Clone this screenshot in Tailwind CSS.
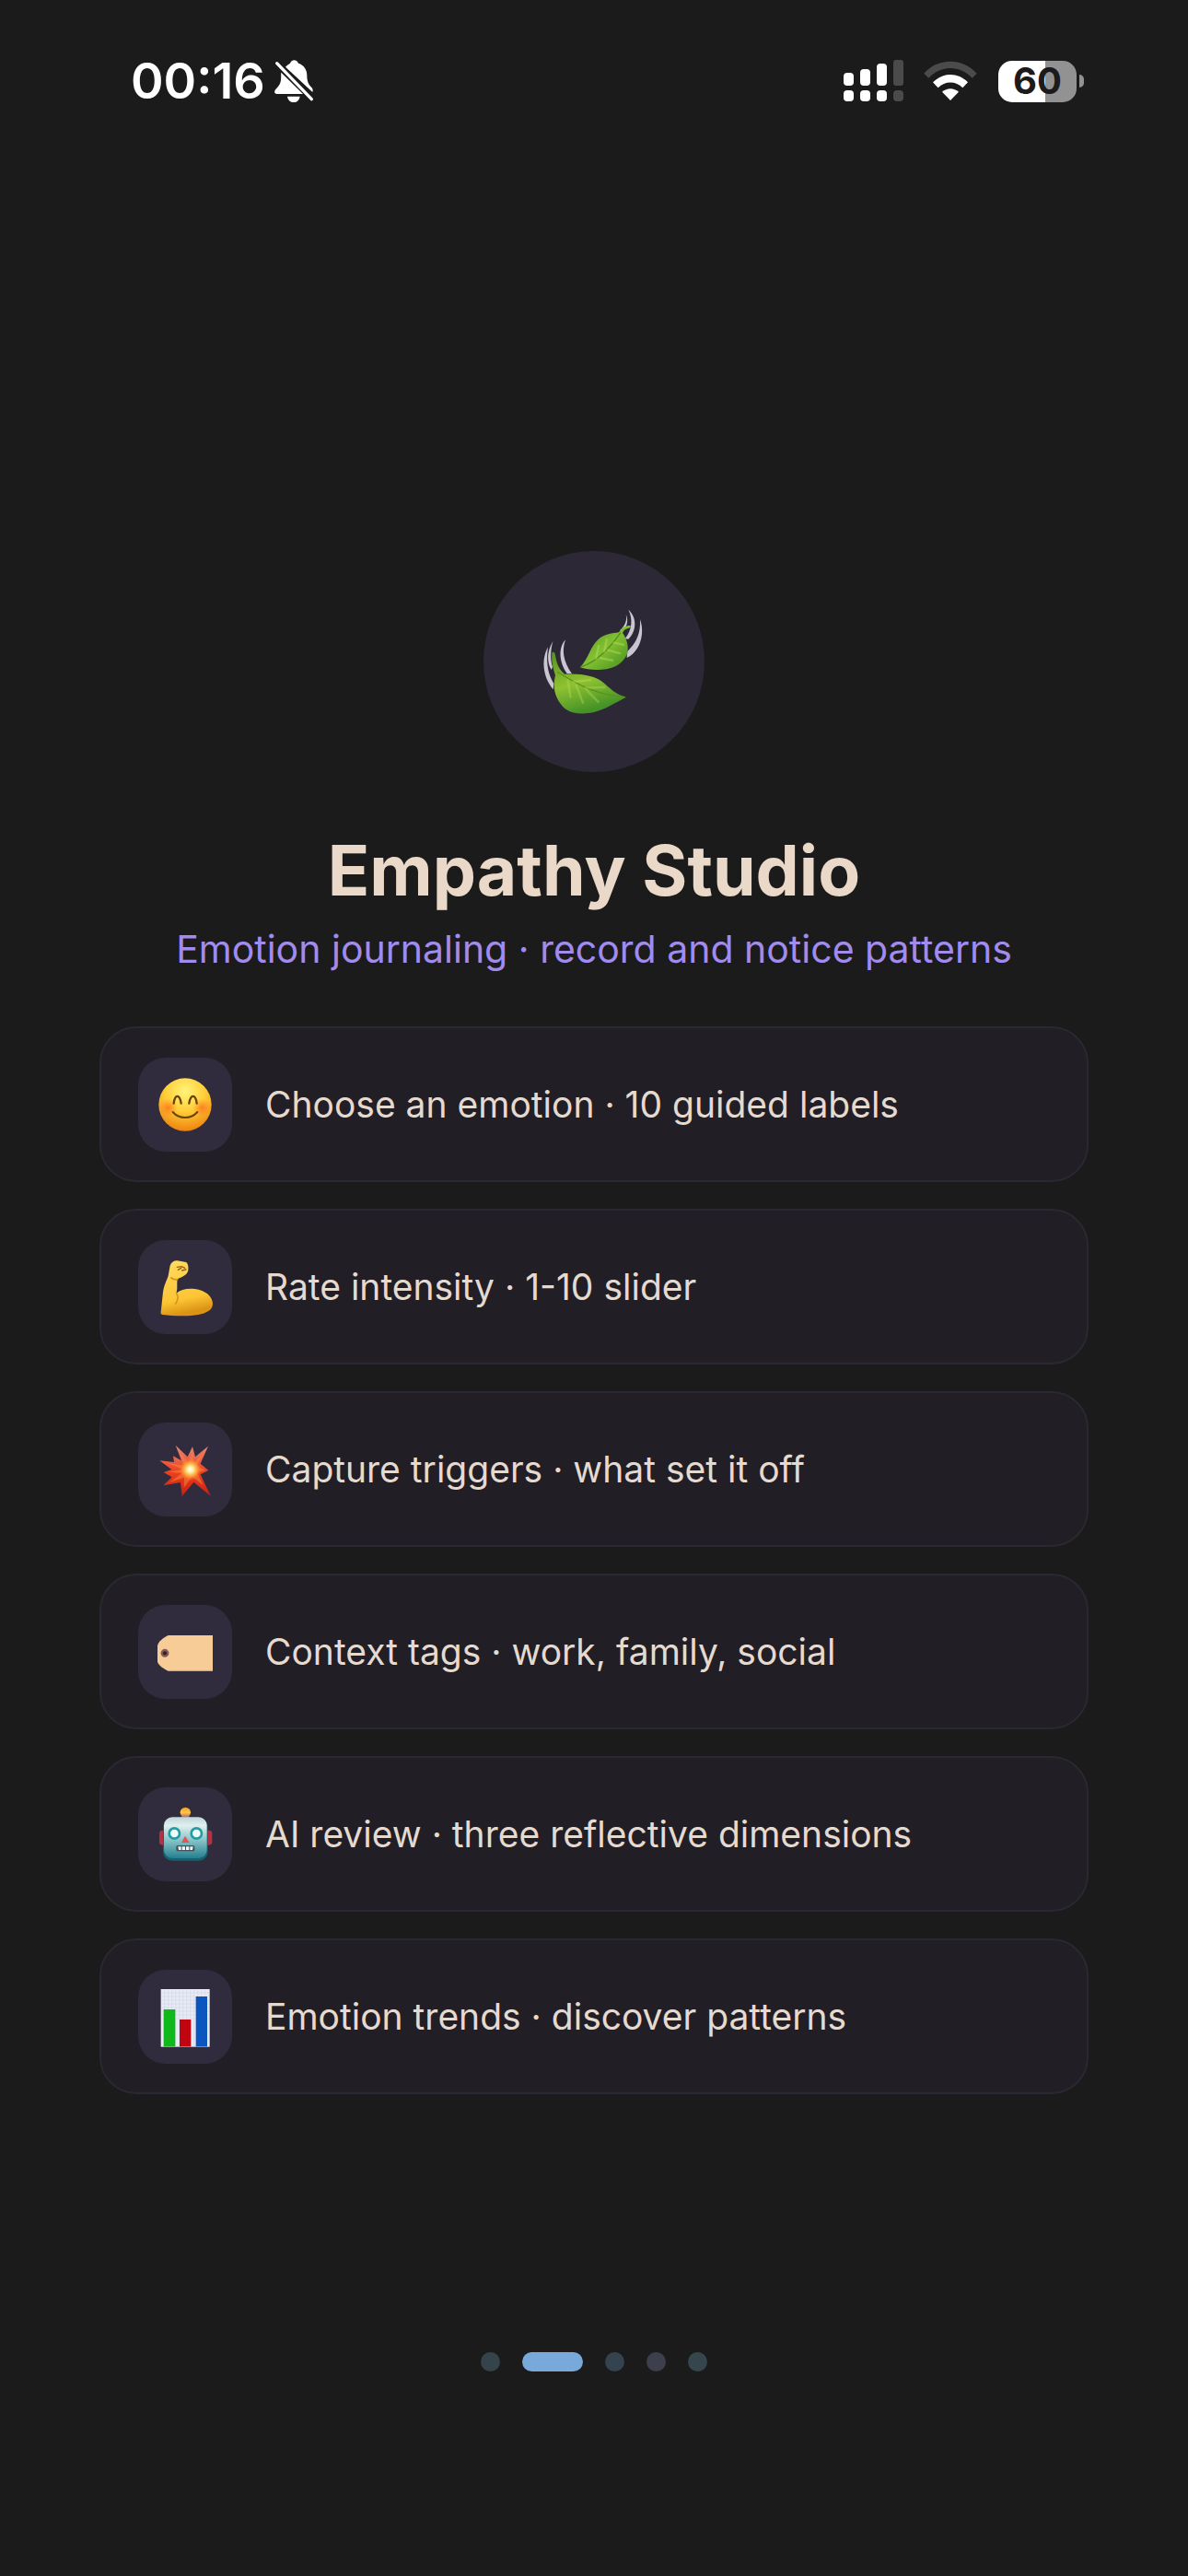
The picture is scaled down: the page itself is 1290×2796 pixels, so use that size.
<!doctype html>
<html lang="en">

<head>
    <meta charset="utf-8">
    <meta name="viewport" content="width=device-width, initial-scale=1">
    <title>Empathy Studio</title>
    <script src="https://cdn.jsdelivr.net/npm/@tailwindcss/browser@4"></script>
</head>

<body class="flex min-h-screen flex-col bg-[#1b1b1b] font-['Inter','Roboto',sans-serif] text-[#e5dad0]">
    <!-- Status bar -->
    <header class="flex h-44 items-center justify-between pr-[113px] pl-[142px] text-white">
        <div class="flex items-center gap-2.5">
            <time class="text-[54px] leading-none font-semibold">00:16</time>
            <svg class="h-[46px] w-[43px]" viewBox="0 0 129 138" fill="#fff" aria-label="Silent mode">
                <path d="M36 23C42 16 47 14 51 11C54 3 60 1 64 1C69 1 75 3 78 11C96 17 106 31 106 50C106 72 112 80 122 91C125 95 126 101 124 105Z" />
                <path d="M22 41L93 111H8C2 111-1 107 1 101C3 93 18 87 21 66C22 57 21 48 22 41Z" />
                <path d="M42 119H83C81 131 73 138 63 138C52 138 44 131 42 119Z" />
                <path d="M8 11L121 128" stroke="#fff" stroke-width="10" stroke-linecap="round" />
            </svg>
        </div>
        <div class="flex items-center">
            <svg class="h-[46px] w-[66px]" viewBox="0 0 66 46" fill="#fff" aria-label="Signal">
                <rect x="0" y="14" width="11" height="14" rx="4" />
                <rect x="18" y="10" width="11" height="18" rx="4" />
                <rect x="36" y="4" width="11" height="24" rx="4" />
                <rect x="54" y="0" width="11" height="28" rx="3" fill="#4b4b4b" />
                <rect x="0" y="33" width="11" height="12" rx="4" />
                <rect x="18" y="33" width="11" height="12" rx="4" />
                <rect x="36" y="33" width="11" height="12" rx="4" />
                <rect x="54" y="33" width="11" height="12" rx="4" fill="#4b4b4b" />
            </svg>
            <svg class="ml-[21px] h-[44px] w-[58px]" viewBox="0 0 174 132" aria-label="Wi-Fi">
                <path d="M1 41C48-11 126-11 173 41L158 56C118 13 56 13 16 56Z" fill="#4b4b4b" />
                <path d="M30 70C62 37 112 37 144 70L127 88C105 65 69 65 47 88Z" fill="#fff" />
                <path d="M60 101C76 87 98 87 114 101L87 129Z" fill="#fff" />
            </svg>
            <div class="ml-[23px] flex items-center gap-[3px]">
                <div class="flex h-[45px] w-[85px] items-center justify-center rounded-[15px] bg-linear-to-r from-white from-60% to-[#929292] to-60% text-[40px] leading-none font-bold text-[#1b1b1b]">60</div>
                <div class="h-[14px] w-[5px] rounded-r-full bg-[#929292]"></div>
            </div>
        </div>
    </header>

    <main class="flex flex-1 flex-col px-[108px] pt-[422px]">
        <div class="mx-auto size-[240px] rounded-full bg-[#2c2835]">
            <svg class="size-full" viewBox="45 54 720 720" aria-hidden="true">
                <defs>
                    <linearGradient id="leafLow" x1="0" y1="0" x2=".35" y2="1">
                        <stop offset="0" stop-color="#57911c" />
                        <stop offset=".55" stop-color="#8fc232" />
                        <stop offset="1" stop-color="#459227" />
                    </linearGradient>
                    <linearGradient id="leafHigh" x1="0" y1="0" x2="1" y2="1">
                        <stop offset="0" stop-color="#4c9420" />
                        <stop offset=".5" stop-color="#83c033" />
                        <stop offset="1" stop-color="#3f8c1e" />
                    </linearGradient>
                </defs>
                <!-- motion strokes -->
                <g fill="#c9c5d3">
                    <path d="M255 367C234 405 236 461 272 505L274 486C252 449 249 412 255 367Z" />
                    <path d="M271 348C250 383 252 419 266 441L270 432C262 407 263 379 271 348Z" />
                    <path d="M312 343C288 369 291 417 317 453L333 454C304 412 300 379 312 343Z" />
                    <path d="M509 260C514 281 505 298 489 313L501 312C515 296 517 277 509 260Z" />
                    <path d="M517 245C533 278 528 311 506 340L517 341C542 318 548 272 517 245Z" />
                    <path d="M555 277C557 320 546 350 514 381L512 402C552 385 573 327 555 277Z" />
                </g>
                <path d="M268 385C275 381 278 386 279 394C283 422 292 441 309 455C365 452 407 461 431 479C457 500 474 520 509 530C468 551 435 578 378 583C330 588 307 568 297 553C269 516 274 481 279 459C270 432 266 410 268 385Z" fill="url(#leafLow)" />
                <path d="M286 448C336 478 396 520 507 530" fill="none" stroke="#5a921d" stroke-width="4" />
                <path d="M319 472L329 532M346 489L370 551M378 504L421 548M335 480L397 474M374 500L442 498" fill="none" stroke="#c3e05a" stroke-width="7" opacity=".35" />
                <path d="M360 433C388 403 392 367 419 342C441 323 465 323 486 319C497 302 510 296 523 297C527 301 522 305 516 306C506 308 501 313 498 321C513 340 520 371 512 392C501 415 475 438 431 440C404 442 381 440 360 433Z" fill="url(#leafHigh)" />
                <path d="M362 432C420 413 458 367 492 320" fill="none" stroke="#52901c" stroke-width="4" />
                <path d="M411 407L421 360M438 385L447 340M422 402L468 411M447 376L492 388M467 352L504 360" fill="none" stroke="#c6e25c" stroke-width="7" opacity=".4" />
            </svg>
        </div>

        <h1 class="mt-[62px] text-center text-[75px] leading-[90px] font-bold text-[#ead9c8]">Empathy Studio</h1>
        <p class="mt-3 text-center text-[41px] leading-[56px] text-[#a18bef]">Emotion journaling · record and notice patterns</p>

        <ul class="mt-14 flex flex-col gap-[29px]">
            <li class="flex h-[169px] items-center gap-9 rounded-[40px] border-2 border-[#2a2830] bg-[#211e25] px-10">
                <svg class="size-[102px] shrink-0 rounded-[30px] bg-[#302c3d]" viewBox="0 0 306 306" aria-hidden="true">
                    <defs>
                        <radialGradient id="face" cx=".5" cy=".25" r=".75">
                            <stop offset="0" stop-color="#fff47a" />
                            <stop offset=".5" stop-color="#ffce38" />
                            <stop offset="1" stop-color="#ee8410" />
                        </radialGradient>
                        <radialGradient id="blush">
                            <stop offset="0" stop-color="#ff6f1c" stop-opacity=".8" />
                            <stop offset="1" stop-color="#ff7b1c" stop-opacity="0" />
                        </radialGradient>
                    </defs>
                    <circle cx="153" cy="153" r="86" fill="url(#face)" />
                    <circle cx="98" cy="163" r="30" fill="url(#blush)" />
                    <circle cx="208" cy="163" r="30" fill="url(#blush)" />
                    <g fill="none" stroke="#6b4208" stroke-linecap="round">
                        <path d="M116 149C120 118 135 118 140 149M166 149C171 118 187 118 191 149" stroke-width="7" />
                        <path d="M113 177C134 201 172 201 193 177" stroke-width="6" />
                    </g>
                </svg>
                <span class="text-[39px] leading-[52px]">Choose an emotion · 10 guided labels</span>
            </li>
            <li class="flex h-[169px] items-center gap-9 rounded-[40px] border-2 border-[#2a2830] bg-[#211e25] px-10">
                <svg class="size-[102px] shrink-0 rounded-[30px] bg-[#302c3d]" viewBox="0 0 306 306" aria-hidden="true">
                    <defs>
                        <linearGradient id="arm" x1="0" y1="0" x2=".2" y2="1">
                            <stop offset="0" stop-color="#ffdc62" />
                            <stop offset=".75" stop-color="#fcc534" />
                            <stop offset="1" stop-color="#dd9415" />
                        </linearGradient>
                    </defs>
                    <path d="M104 83C108 72 117 66 128 67L156 72C163 76 164 87 163 99C159 114 145 119 128 127C125 145 130 158 124 173C139 161 160 156 185 159C219 163 243 184 243 207C242 226 231 231 212 239C178 249 139 247 109 246L80 243C73 242 73 237 75 226L81 169C84 146 94 130 98 116Z" fill="url(#arm)" />
                    <path d="M128 128C119 130 113 127 107 123M125 174C132 183 130 195 122 207" fill="none" stroke="#d9921a" stroke-width="5" stroke-linecap="round" />
                    <path d="M127 88L142 86L152 91M130 97L140 91M143 99L156 96" fill="none" stroke="#94600d" stroke-width="4" stroke-linecap="round" />
                </svg>
                <span class="text-[39px] leading-[52px]">Rate intensity · 1-10 slider</span>
            </li>
            <li class="flex h-[169px] items-center gap-9 rounded-[40px] border-2 border-[#2a2830] bg-[#211e25] px-10">
                <svg class="size-[102px] shrink-0 rounded-[30px] bg-[#302c3d]" viewBox="0 0 306 306" aria-hidden="true">
                    <defs>
                        <linearGradient id="burst" x1="0" y1="0" x2="0" y2="1">
                            <stop offset="0" stop-color="#e58878" />
                            <stop offset=".5" stop-color="#ec4322" />
                            <stop offset="1" stop-color="#cb1e10" />
                        </linearGradient>
                        <radialGradient id="glow">
                            <stop offset="0" stop-color="#fff" />
                            <stop offset=".25" stop-color="#fff3a0" />
                            <stop offset=".6" stop-color="#ffae3c" stop-opacity=".8" />
                            <stop offset="1" stop-color="#ff5a1e" stop-opacity="0" />
                        </radialGradient>
                    </defs>
                    <path d="M122 74L161 112L177 79L186 112L228 77L203 134L229 156L203 169L236 239L181 194L143 240L138 195L82 205L110 178L83 162L109 153L70 124L117 129L114 109L141 124Z" fill="url(#burst)" />
                    <path d="M133 96L164 132L177 102L181 132L211 101L191 142L218 156L191 162L212 205L176 176L149 212L150 179L104 194L143 165L100 161L145 152L96 132L150 141Z" fill="#ff9440" opacity=".45" />
                    <circle cx="170" cy="153" r="38" fill="url(#glow)" />
                </svg>
                <span class="text-[39px] leading-[52px]">Capture triggers · what set it off</span>
            </li>
            <li class="flex h-[169px] items-center gap-9 rounded-[40px] border-2 border-[#2a2830] bg-[#211e25] px-10">
                <svg class="size-[102px] shrink-0 rounded-[30px] bg-[#302c3d]" viewBox="0 0 306 306" aria-hidden="true">
                    <path d="M98 99H243V215H98C83 208 67 197 63 185V132C67 117 83 107 98 99Z" fill="#f8cc96" />
                    <path d="M98 214H243" stroke="#dda66b" stroke-width="3" />
                    <circle cx="87" cy="157" r="10" fill="#351e2d" stroke="#885c56" stroke-width="7" />
                </svg>
                <span class="text-[39px] leading-[52px]">Context tags · work, family, social</span>
            </li>
            <li class="flex h-[169px] items-center gap-9 rounded-[40px] border-2 border-[#2a2830] bg-[#211e25] px-10">
                <svg class="size-[102px] shrink-0 rounded-[30px] bg-[#302c3d]" viewBox="0 0 306 306" aria-hidden="true">
                    <defs>
                        <linearGradient id="head" x1="0" y1="0" x2="0" y2="1">
                            <stop offset="0" stop-color="#bfd3d6" />
                            <stop offset=".2" stop-color="#e1f0ef" />
                            <stop offset=".55" stop-color="#8bc5ca" />
                            <stop offset="1" stop-color="#237f8e" />
                        </linearGradient>
                        <linearGradient id="bulb" x1="0" y1="0" x2="0" y2="1">
                            <stop offset="0" stop-color="#f09b20" />
                            <stop offset=".5" stop-color="#ffca48" />
                            <stop offset="1" stop-color="#b2566e" />
                        </linearGradient>
                    </defs>
                    <rect x="69" y="140" width="24" height="48" rx="10" fill="#b62f43" />
                    <rect x="217" y="140" width="24" height="48" rx="10" fill="#b62f43" />
                    <path d="M133 101C137 91 170 91 174 101Z" fill="#8a6383" />
                    <circle cx="154" cy="82" r="17" fill="url(#bulb)" />
                    <rect x="81" y="100" width="146" height="139" rx="29" fill="#16606f" />
                    <rect x="84" y="97" width="140" height="134" rx="27" fill="url(#head)" />
                    <g fill="#effefd" stroke="#249da2" stroke-width="8">
                        <circle cx="118" cy="150" r="17" />
                        <circle cx="190" cy="150" r="17" />
                    </g>
                    <path d="M153 158L167 180H141Z" fill="#dc5858" />
                    <rect x="124" y="189" width="60" height="19" rx="5" fill="#3c555d" />
                    <path d="M130 193H140V204H132ZM143 193H153V204H143ZM156 193H166V204H156ZM169 193H179L177 204H169Z" fill="#f2f6f4" />
                </svg>
                <span class="text-[39px] leading-[52px]">AI review · three reflective dimensions</span>
            </li>
            <li class="flex h-[169px] items-center gap-9 rounded-[40px] border-2 border-[#2a2830] bg-[#211e25] px-10">
                <svg class="size-[102px] shrink-0 rounded-[30px] bg-[#302c3d]" viewBox="0 0 306 306" aria-hidden="true">
                    <rect x="74" y="63" width="159" height="188" fill="#e9eaf4" />
                    <path d="M86 65V249M98 65V249M110 65V249M122 65V249M134 65V249M146 65V249M158 65V249M170 65V249M182 65V249M194 65V249M206 65V249M218 65V249M76 75H231M76 87H231M76 99H231M76 111H231M76 123H231M76 135H231M76 147H231M76 159H231" stroke="#d2d7e7" stroke-width="2" />
                    <rect x="83" y="129" width="38" height="121" fill="#0fb91c" />
                    <rect x="135" y="162" width="37" height="88" fill="#c00410" />
                    <rect x="188" y="87" width="37" height="163" fill="#0b55be" />
                </svg>
                <span class="text-[39px] leading-[52px]">Emotion trends · discover patterns</span>
            </li>
        </ul>
    </main>

    <!-- Page indicator -->
    <nav class="flex items-center justify-center gap-6 pb-[222px]" aria-label="Onboarding pages">
        <button class="size-[21px] rounded-full bg-[#35434a]" type="button" aria-label="Page 1"></button>
        <button class="h-[21px] w-[66px] rounded-full bg-[#79a9da]" type="button" aria-label="Page 2" aria-current="page"></button>
        <button class="size-[21px] rounded-full bg-[#35434f]" type="button" aria-label="Page 3"></button>
        <button class="size-[21px] rounded-full bg-[#3d3f4d]" type="button" aria-label="Page 4"></button>
        <button class="size-[21px] rounded-full bg-[#35464d]" type="button" aria-label="Page 5"></button>
    </nav>
</body>

</html>
